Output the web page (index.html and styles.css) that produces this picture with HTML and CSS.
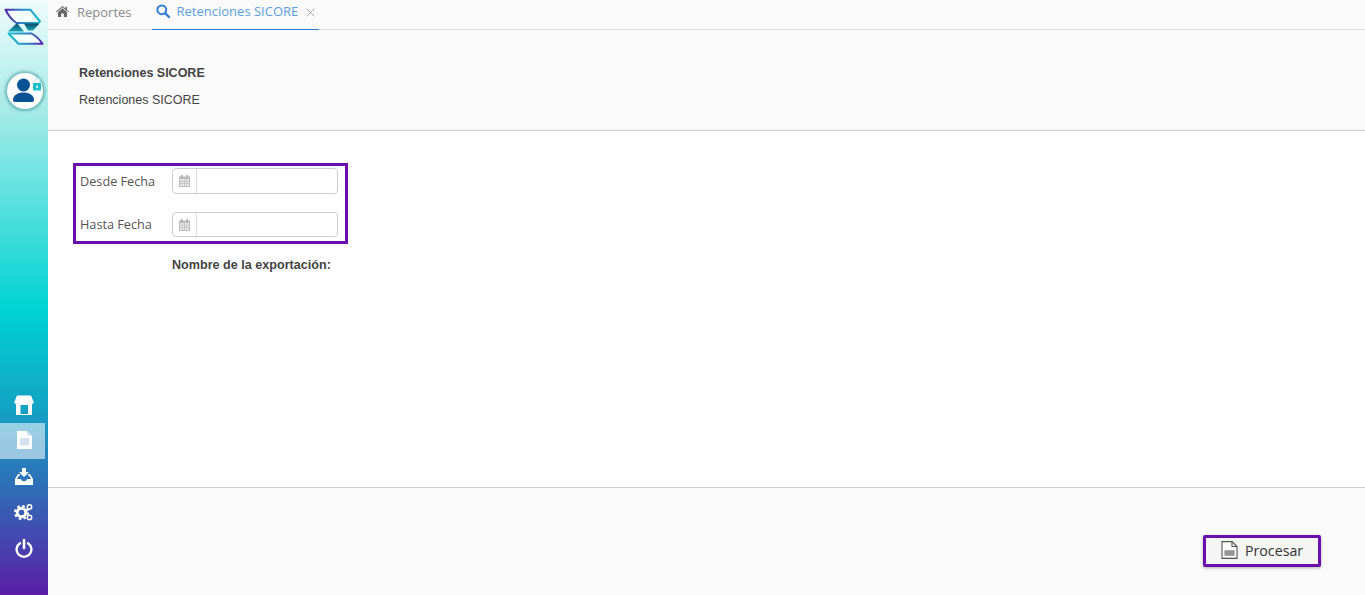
FILE: index.html
```html
<!DOCTYPE html>
<html lang="es">
<head>
<meta charset="utf-8">
<title>Retenciones SICORE</title>
<link rel="stylesheet" href="styles.css">
</head>
<body>
<aside class="sidebar">
  <svg class="logo" viewBox="4 8 40 37" width="40" height="37">
    <defs>
      <linearGradient id="lg1" gradientUnits="userSpaceOnUse" x1="5" y1="0" x2="41" y2="0"><stop offset="0" stop-color="#5a1fa8"/><stop offset=".45" stop-color="#2f86c6"/><stop offset="1" stop-color="#12bccb"/></linearGradient>
      <linearGradient id="lg2" gradientUnits="userSpaceOnUse" x1="8" y1="0" x2="43" y2="0"><stop offset="0" stop-color="#16c2cf"/><stop offset=".55" stop-color="#2f86c6"/><stop offset="1" stop-color="#5a1fa8"/></linearGradient>
      <linearGradient id="lg3" x1="0" y1="0" x2="0" y2="1"><stop offset="0" stop-color="#0a4a68"/><stop offset="1" stop-color="#17a8b8"/></linearGradient>
    </defs>
    <path d="M5.500 9.800H30.500L40 21.500L38 23H16.500C12 20 8 15 5.500 9.800Z" fill="#f3fdfc" stroke="url(#lg1)" stroke-width="2" stroke-linejoin="round"/>
    <path d="M8.500 33.500H31.500C36 36 40 40 42.500 43.800H18.500Z" fill="#f3fdfc" stroke="url(#lg2)" stroke-width="2" stroke-linejoin="round"/>
    <path d="M8 31.500L17 23L24 31.500Z" fill="url(#lg3)"/>
    <path d="M24 23.500H39.500L33 30.500H28Z" fill="url(#lg3)"/>
  </svg>
  <div class="avatar">
    <svg viewBox="0 0 36 36" width="36" height="36">
      <circle cx="16.500" cy="12" r="6.500" fill="#0a5296"/>
      <path d="M6 27c0-5 5-7.500 10.500-7.500S27 22 27 27c0 1-.7 2-2 2H8c-1.300 0-2-1-2-2Z" fill="#0a5296"/>
      <path d="M28 10.500V8a2.300 2.300 0 0 1 4.600 0v2.500" fill="none" stroke="#c8eeee" stroke-width="1.200"/>
      <rect x="26" y="10" width="8" height="7.500" rx="1" fill="#16bfc9"/>
      <rect x="29.300" y="12.200" width="1.500" height="3" rx=".7" fill="#fff"/>
    </svg>
  </div>
  <nav class="menu">
    <a class="item">
      <svg viewBox="0 0 20 20" width="20" height="20"><path d="M3 .5H17L19.800 7.500C19.800 8.800 18.800 8.800 18 8.800C17 8.800 16.600 8.300 16.400 7.800C16.100 8.600 15.300 8.800 14.700 8.800C14 8.800 13.400 8.400 13.200 7.800C12.900 8.600 12.200 8.800 11.600 8.800C11 8.800 10.300 8.500 10 7.800C9.700 8.500 9 8.800 8.400 8.800C7.800 8.800 7.100 8.600 6.800 7.800C6.600 8.400 6 8.800 5.300 8.800C4.700 8.800 3.900 8.600 3.600 7.800C3.400 8.300 3 8.800 2 8.800C1.200 8.800 .2 8.800 .2 7.500Z" fill="#fff"/><path d="M2 8H18V20H2ZM6.500 10V19H14V10Z" fill="#fff" fill-rule="evenodd"/></svg>
    </a>
    <a class="item active">
      <svg class="doc" viewBox="0 0 15 18" width="15" height="18"><path d="M0 0H9.500L15 5V18H0Z" fill="#fff"/><path d="M10 0V4.500H15Z" fill="#cfe2ee"/><path d="M3 7H12V14.500H3Z" fill="#d4e4ef"/></svg>
    </a>
    <a class="item">
      <svg viewBox="0 1 20 18" width="20" height="18"><path d="M8 0H12V5H15L10 10L5 5H8Z" fill="#fff"/><path d="M4 7H5.500L6.500 8.500H5L3 12H6.800L8.200 14H11.800L13.200 12H17L15 8.500H13.500L14.500 7H16L19 12V18H1V12Z" fill="#fff"/></svg>
    </a>
    <a class="item">
      <svg viewBox="0 1 20 20" width="20" height="20"><circle cx="7.500" cy="10.500" r="4.300" fill="none" stroke="#fff" stroke-width="3"/><circle cx="7.500" cy="10.500" r="6.500" fill="none" stroke="#fff" stroke-width="2" stroke-dasharray="2.600 2.500"/><circle cx="15.500" cy="5" r="2.200" fill="none" stroke="#fff" stroke-width="1.500"/><circle cx="15.500" cy="15.500" r="2.200" fill="none" stroke="#fff" stroke-width="1.500"/></svg>
    </a>
    <a class="item">
      <svg viewBox="0 0 18 20" width="18" height="20"><path d="M9 1V9" stroke="#fff" stroke-width="2.600" stroke-linecap="round" fill="none"/><path d="M5 4.200A7.400 7.400 0 1 0 13 4.200" stroke="#fff" stroke-width="2.400" stroke-linecap="round" fill="none"/></svg>
    </a>
  </nav>
</aside>
<main class="main">
  <div class="tabs">
    <a class="tab">
      <svg class="tab-icon" viewBox="0 0 13 11" width="13" height="11"><path d="M6.500 0L9.500 2.600V.8H11V3.900L13 5.600L12.400 6.300L6.500 1.300L.6 6.300L0 5.600Z" fill="#666"/><path d="M6.500 2.300L11 6.100V11H7.800V7.600H5.200V11H2V6.100Z" fill="#666"/></svg>
      <span>Reportes</span>
    </a>
    <a class="tab tab-active">
      <svg class="tab-icon" viewBox="0 0 14 14" width="14" height="14"><circle cx="5.800" cy="5.800" r="4.400" fill="none" stroke="#2a7fd5" stroke-width="2"/><path d="M9 9L13 13" stroke="#2a7fd5" stroke-width="2.400" stroke-linecap="round"/></svg>
      <span>Retenciones SICORE</span>
      <svg class="close" viewBox="0 0 9 9" width="9" height="9"><path d="M.5 .5L8.500 8.500M8.500 .5L.5 8.500" stroke="#aaa" stroke-width="1" fill="none"/></svg>
    </a>
  </div>
  <header class="head">
    <h1 class="title">Retenciones SICORE</h1>
    <p class="subtitle">Retenciones SICORE</p>
  </header>
  <section class="content">
    <div class="dates">
      <div class="row">
        <label class="label">Desde Fecha</label>
        <div class="date-input">
          <span class="addon"><svg viewBox="0 0 11 12" width="11" height="12"><path d="M0 1.500H11V12H0Z" fill="#bbb"/><path d="M2 0H3.500V2.500H2ZM7.500 0H9V2.500H7.500Z" fill="#aaa"/><path d="M1 4H10V11H1Z" fill="#eee"/><path d="M3.200 4V11M5.500 4V11M7.800 4V11M1 6.300H10M1 8.600H10" stroke="#bbb" stroke-width=".7"/></svg></span>
        </div>
      </div>
      <div class="row row-short">
        <label class="label">Hasta Fecha</label>
        <div class="date-input">
          <span class="addon"><svg viewBox="0 0 11 12" width="11" height="12"><path d="M0 1.500H11V12H0Z" fill="#bbb"/><path d="M2 0H3.500V2.500H2ZM7.500 0H9V2.500H7.500Z" fill="#aaa"/><path d="M1 4H10V11H1Z" fill="#eee"/><path d="M3.200 4V11M5.500 4V11M7.800 4V11M1 6.300H10M1 8.600H10" stroke="#bbb" stroke-width=".7"/></svg></span>
        </div>
      </div>
    </div>
    <p class="export">Nombre de la exportación:</p>
  </section>
  <footer class="foot">
    <button class="btn">
      <svg viewBox="0 0 17 18" width="17" height="18"><path d="M1 .6H11L16 5.500V17.400H1Z" fill="#fafafa" stroke="#555" stroke-width="1.100"/><path d="M11 .6V5.500H16" fill="none" stroke="#555" stroke-width="1.100"/><path d="M3.500 9H13.500V15H3.500Z" fill="#aaa"/><path d="M3.500 11H13.500M3.500 13H13.500" stroke="#777" stroke-width=".8"/></svg>
      <span>Procesar</span>
    </button>
  </footer>
</main>
</body>
</html>
```
FILE: styles.css
```css
* { box-sizing: border-box; }
html, body { height: 100%; }
body {
  margin: 0;
  display: flex;
  height: 595px;
  overflow: hidden;
  background: #fff;
  color: #444;
  font-family: "Open Sans", sans-serif;
  font-size: 13px;
}
.sidebar {
  width: 48px;
  flex: none;
  display: flex;
  flex-direction: column;
  background: linear-gradient(180deg, #eefcfb 0%, #a8ebe8 18%, #00d3d3 52%, #12a4c6 68%, #2f6db6 82%, #5a1ea8 100%);
}
.logo { margin: 8px 0 0 4px; display: block; flex: none; }
.avatar {
  width: 36px;
  height: 36px;
  margin: 28px 0 0 7px;
  border-radius: 50%;
  background: #fff;
  box-shadow: 0 0 3px 2px rgba(0, 100, 110, .4);
}
.avatar svg { display: block; overflow: visible; }
.menu { margin-top: auto; margin-bottom: 28px; display: flex; flex-direction: column; }
.item {
  height: 36px;
  width: 48px;
  display: flex;
  align-items: center;
  justify-content: center;
}
.active {
  background: rgba(255, 255, 255, .55);
  background-clip: padding-box;
  border-right: 3px solid transparent;
  padding-left: 3px;
}
.doc { margin-bottom: 2px; }
.main { flex: 1; min-width: 0; display: flex; flex-direction: column; }
.tabs {
  height: 30px;
  flex: none;
  display: flex;
  gap: 20px;
  padding-left: 8px;
  background: #fafafa;
  border-bottom: 1px solid #ddd;
  font-size: 13px;
}
.tab {
  height: 30px;
  display: flex;
  align-items: center;
  gap: 8px;
  padding-bottom: 7px;
  color: #8a8a8a;
}
.tab-icon { flex: none; }
.tab-active {
  padding: 0 4px 7px 4px;
  gap: 7px;
  color: #5a9fe2;
  border-bottom: 1px solid #2a7fd5;
}
.close { flex: none; margin: 2px 0 0 1px; }
.head {
  height: 101px;
  flex: none;
  padding: 36px 0 0 31px;
  background: #fafafa;
  border-bottom: 1px solid #ccc;
  font-family: "Liberation Sans", sans-serif;
  font-size: 12.500px;
}
.title { margin: 0; font-size: 12.500px; line-height: 14px; font-weight: 700; color: #444; }
.subtitle { margin: 13px 0 0; line-height: 14px; color: #444; }
.content { flex: 1; padding: 32px 0 0 25px; background: #fff; }
.dates {
  width: 275px;
  height: 81px;
  padding: 2px 7px 0 4px;
  border: 3px solid #6a0dad;
}
.row { display: flex; align-items: center; height: 26px; }
.row + .row { margin-top: 18px; }
.row-short { height: 25px; }
.row-short .date-input { height: 25px; }
.row-short .label { padding-bottom: 2px; }
.label { width: 92px; font-size: 12.700px; color: #555; }
.date-input {
  width: 166px;
  height: 26px;
  border: 1px solid #ccc;
  border-radius: 4px;
  background: #fff;
}
.addon {
  width: 24px;
  height: 100%;
  display: flex;
  align-items: center;
  justify-content: center;
  border-right: 1px solid #ddd;
}
.export {
  margin: 13px 0 0 99px;
  font-family: "Liberation Sans", sans-serif;
  font-size: 12.600px;
  line-height: 16px;
  font-weight: 700;
  color: #444;
}
.foot {
  height: 108px;
  flex: none;
  display: flex;
  justify-content: flex-end;
  padding: 47px 44px 0 0;
  background: #fafafa;
  border-top: 1px solid #ccc;
}
.btn {
  width: 118px;
  height: 32px;
  display: flex;
  align-items: center;
  gap: 7px;
  padding: 0 0 2px 15px;
  border: 3px solid #6a0dad;
  border-radius: 2px;
  background: #f5f5f5;
  box-shadow: 0 1px 3px rgba(0, 0, 0, .3);
  color: #333;
  font-family: "Open Sans", sans-serif;
  font-size: 14.200px;
}
```
